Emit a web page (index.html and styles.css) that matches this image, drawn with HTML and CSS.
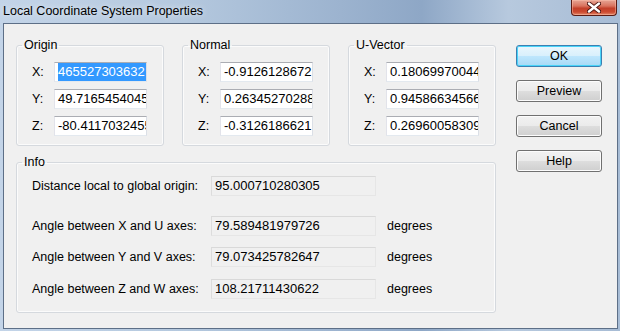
FILE: index.html
```html
<!DOCTYPE html>
<html lang="en">
<head>
    <meta charset="UTF-8">
    <title>Local Coordinate System Properties</title>
    <link rel="stylesheet" href="styles.css">
</head>
<body>
    <div class="window">
        <div class="titlebar">
            <span class="title">Local Coordinate System Properties</span>
            <div class="close">
                <svg width="14" height="11" viewBox="0 0 14 11">
                    <path d="M2 1.5 L12 9.5 M12 1.5 L2 9.5" stroke="#4a1410" stroke-width="4.2" stroke-linecap="round"/>
                    <path d="M2 1.5 L12 9.5 M12 1.5 L2 9.5" stroke="#ffffff" stroke-width="2.4" stroke-linecap="round"/>
                </svg>
            </div>
        </div>
        <div class="client">
            <div class="main">
                <div class="groups">
                    <fieldset class="group">
                        <legend>Origin</legend>
                        <div class="rows">
                            <div class="row"><span class="lbl">X:</span><div class="field"><span class="sel">465527303632</span></div></div>
                            <div class="row"><span class="lbl">Y:</span><div class="field">49.7165454045</div></div>
                            <div class="row"><span class="lbl">Z:</span><div class="field">-80.4117032455</div></div>
                        </div>
                    </fieldset>
                    <fieldset class="group">
                        <legend>Normal</legend>
                        <div class="rows">
                            <div class="row"><span class="lbl">X:</span><div class="field">-0.9126128672</div></div>
                            <div class="row"><span class="lbl">Y:</span><div class="field">0.26345270288</div></div>
                            <div class="row"><span class="lbl">Z:</span><div class="field">-0.3126186621</div></div>
                        </div>
                    </fieldset>
                    <fieldset class="group">
                        <legend>U-Vector</legend>
                        <div class="rows">
                            <div class="row"><span class="lbl">X:</span><div class="field">0.18069970044</div></div>
                            <div class="row"><span class="lbl">Y:</span><div class="field">0.94586634566</div></div>
                            <div class="row"><span class="lbl">Z:</span><div class="field">0.26960058309</div></div>
                        </div>
                    </fieldset>
                </div>

                <fieldset class="info">
                    <legend>Info</legend>
                    <div class="info-rows">
                        <div class="info-row"><span class="info-lbl">Distance local to global origin:</span><div class="field ro">95.000710280305</div></div>
                        <div class="info-row first-angle"><span class="info-lbl">Angle between X and U axes:</span><div class="field ro">79.589481979726</div><span class="unit">degrees</span></div>
                        <div class="info-row mid-angle"><span class="info-lbl">Angle between Y and V axes:</span><div class="field ro">79.073425782647</div><span class="unit">degrees</span></div>
                        <div class="info-row last-angle"><span class="info-lbl">Angle between Z and W axes:</span><div class="field ro">108.21711430622</div><span class="unit">degrees</span></div>
                    </div>
                </fieldset>
            </div>

            <div class="buttons">
                <button class="btn default">OK</button>
                <button class="btn">Preview</button>
                <button class="btn">Cancel</button>
                <button class="btn">Help</button>
            </div>
        </div>
    </div>
</body>
</html>
```

FILE: styles.css
```css
* {
    box-sizing: border-box;
}
body {
    margin: 0;
    width: 620px;
    height: 331px;
    overflow: hidden;
    font-family: "Liberation Sans", Arial, sans-serif;
    font-size: 12px;
    color: #000;
}
.window {
    width: 620px;
    height: 331px;
    display: flex;
    flex-direction: column;
    background: linear-gradient(to right, #c3d4e8 0%, #b4c8de 30%, #9cb3cf 55%, #8ea7c6 68%, #b7c9de 82%, #a7bcd5 100%);
}
.titlebar {
    height: 23px;
    display: flex;
    align-items: flex-start;
    justify-content: space-between;
    padding-left: 3px;
}
.title {
    margin-top: 4px;
    font-size: 12.5px;
    text-shadow: 0 0 6px rgba(255, 255, 255, 0.8);
}
.close {
    width: 46px;
    height: 16px;
    margin-right: 3px;
    border: 1px solid #5b1c14;
    border-top: none;
    border-radius: 0 0 4px 4px;
    background: linear-gradient(#e6a595 0%, #d9735e 40%, #c3402a 55%, #cc4a30 80%, #e38a6c 100%);
    box-shadow: inset 0 0 0 1px rgba(255, 200, 180, 0.45);
    display: flex;
    align-items: center;
    justify-content: center;
}
.client {
    flex: 1;
    margin: 0 2px 2px 3px;
    border: 1px solid #5d6f87;
    background: #f0f0f0;
    display: flex;
    padding: 14px 0 0 12px;
}
.main {
    width: 480px;
}
.groups {
    display: flex;
    justify-content: space-between;
}
fieldset {
    margin: 0;
    padding: 0;
    border: 1px solid #d5d9de;
    border-radius: 3px;
    box-shadow: inset 0 0 0 1px #fbfbfb;
}
legend {
    margin-left: 5px;
    padding: 0 2px;
    line-height: 14px;
    font-size: 12.5px;
}
.group {
    width: 148px;
}
.rows {
    display: flex;
    flex-direction: column;
    gap: 7px;
    padding: 10px 0 9px 14px;
}
.row {
    display: flex;
    align-items: center;
    height: 20px;
}
.lbl {
    width: 23px;
    padding-left: 1px;
    font-size: 12.5px;
}
.field {
    width: 93px;
    height: 20px;
    padding: 0 3px;
    line-height: 18px;
    font-size: 13px;
    white-space: nowrap;
    overflow: hidden;
    background: #fff;
    border: 1px solid;
    border-color: #abadb3 #dbdfe6 #e3e9ef #e2e3ea;
}
.sel {
    display: inline-block;
    background: #3399ff;
    color: #fff;
    line-height: 18px;
    padding-right: 1px;
}
.info {
    margin-top: 9px;
}
.info-rows {
    padding: 7px 0 13px 14px;
}
.info-row {
    display: flex;
    align-items: center;
    height: 20px;
}
.first-angle {
    margin-top: 20px;
}
.mid-angle {
    margin-top: 11px;
}
.last-angle {
    margin-top: 12px;
}
.info-lbl {
    width: 180px;
    padding-left: 1px;
    font-size: 12.5px;
}
.field.ro {
    width: 165px;
    background: #f0f0f0;
    border-color: #d9d9d9 #e6e6e6 #e6e6e6 #dcdcdc;
}
.unit {
    margin-left: 11px;
    font-size: 12.5px;
}
.buttons {
    margin: 7px 0 0 20px;
    display: flex;
    flex-direction: column;
    gap: 13px;
}
.btn {
    width: 86px;
    height: 22px;
    padding: 0;
    font-family: "Liberation Sans", Arial, sans-serif;
    font-size: 12.5px;
    color: #000;
    border: 1px solid #707070;
    border-radius: 3px;
    background: linear-gradient(#f2f2f2 0%, #ebebeb 48%, #dddddd 52%, #cfcfcf 100%);
    box-shadow: inset 0 0 0 1px #fcfcfc;
}
.btn.default {
    border-color: #3c7fb1;
    background: linear-gradient(#eaf6fd 0%, #d9f0fc 48%, #bee6fd 52%, #a7d9f5 100%);
    box-shadow: inset 0 0 0 1px #48d4f9;
}
```
